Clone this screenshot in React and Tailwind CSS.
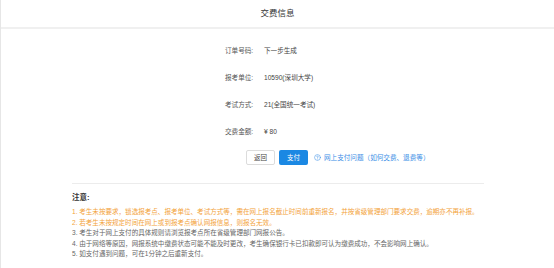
import React from "react";
import { CircleHelp } from "lucide-react";

const rows = [
  { label: "订单号码:", value: "下一步生成" },
  { label: "报考单位:", value: "10590(深圳大学)" },
  { label: "考试方式:", value: "21(全国统一考试)" },
  { label: "交费金额:", value: "¥ 80" },
];

const notes = [
  { text: "1. 考生未按要求，锁选报考点、报考单位、考试方式等，需在网上报名截止时间前重新报名，并按省级管理部门要求交费，逾期亦不再补报。", warn: true },
  { text: "2. 若考生未按规定时间在网上或到报考点确认网报信息，则报名无效。", warn: true },
  { text: "3. 考生对于网上支付的具体规则请浏览报考点所在省级管理部门网报公告。", warn: false },
  { text: "4. 由于网络等原因，网报系统中缴费状态可能不能及时更改，考生确保银行卡已扣款即可认为缴费成功，不会影响网上确认。", warn: false },
  { text: "5. 如支付遇到问题，可在1分钟之后重新支付。", warn: false },
];

const App = () => {
  return (
    <div className="w-[554px] h-[268px] overflow-hidden bg-white border-l border-[#e6e6e6] font-['Liberation_Sans','Noto_Sans_CJK_SC',sans-serif]">
      {/* header */}
      <div className="h-[29px] flex items-center justify-center border-b-2 border-[#f0f0f0]">
        <h1 className="text-[8.5px] text-[#333] leading-none">交费信息</h1>
      </div>

      {/* form */}
      <div className="pl-[224px] pt-[8px]">
        {rows.map((r) => (
          <div key={r.label} className="h-[27px] flex items-center text-[6.6px]">
            <span className="w-[39px] text-[#555]">{r.label}</span>
            <span className="text-[#444]">{r.value}</span>
          </div>
        ))}

        <div className="flex items-center mt-[5px] ml-[21px]">
          <button className="w-[29px] h-[15px] rounded-[2px] border border-[#dcdcdc] bg-white text-[6.5px] text-[#444]">
            返回
          </button>
          <button className="w-[29px] h-[15px] rounded-[2px] bg-[#1b88e3] text-[6.5px] text-white ml-[4px]">
            支付
          </button>
          <a className="flex items-center ml-[6px] text-[6.6px] text-[#3a8ee6] cursor-pointer">
            <CircleHelp size={7} strokeWidth={1.8} className="mr-[3px]" />
            网上支付问题（如何交费、退费等）
          </a>
        </div>
      </div>

      {/* divider */}
      <div className="ml-[71px] w-[412px] mt-[18px] border-t border-[#ececec]" />

      {/* notes */}
      <div className="ml-[71px] mt-[9px]">
        <h2 className="text-[7.5px] font-bold text-[#333] leading-[10px]">注意:</h2>
        <ul className="mt-[4px]">
          {notes.map((n, i) => (
            <li
              key={i}
              className={`text-[6.55px] leading-[10.5px] whitespace-nowrap ${n.warn ? "text-[#f3a33b]" : "text-[#666]"}`}
            >
              {n.text}
            </li>
          ))}
        </ul>
      </div>
    </div>
  );
};

export default App;
